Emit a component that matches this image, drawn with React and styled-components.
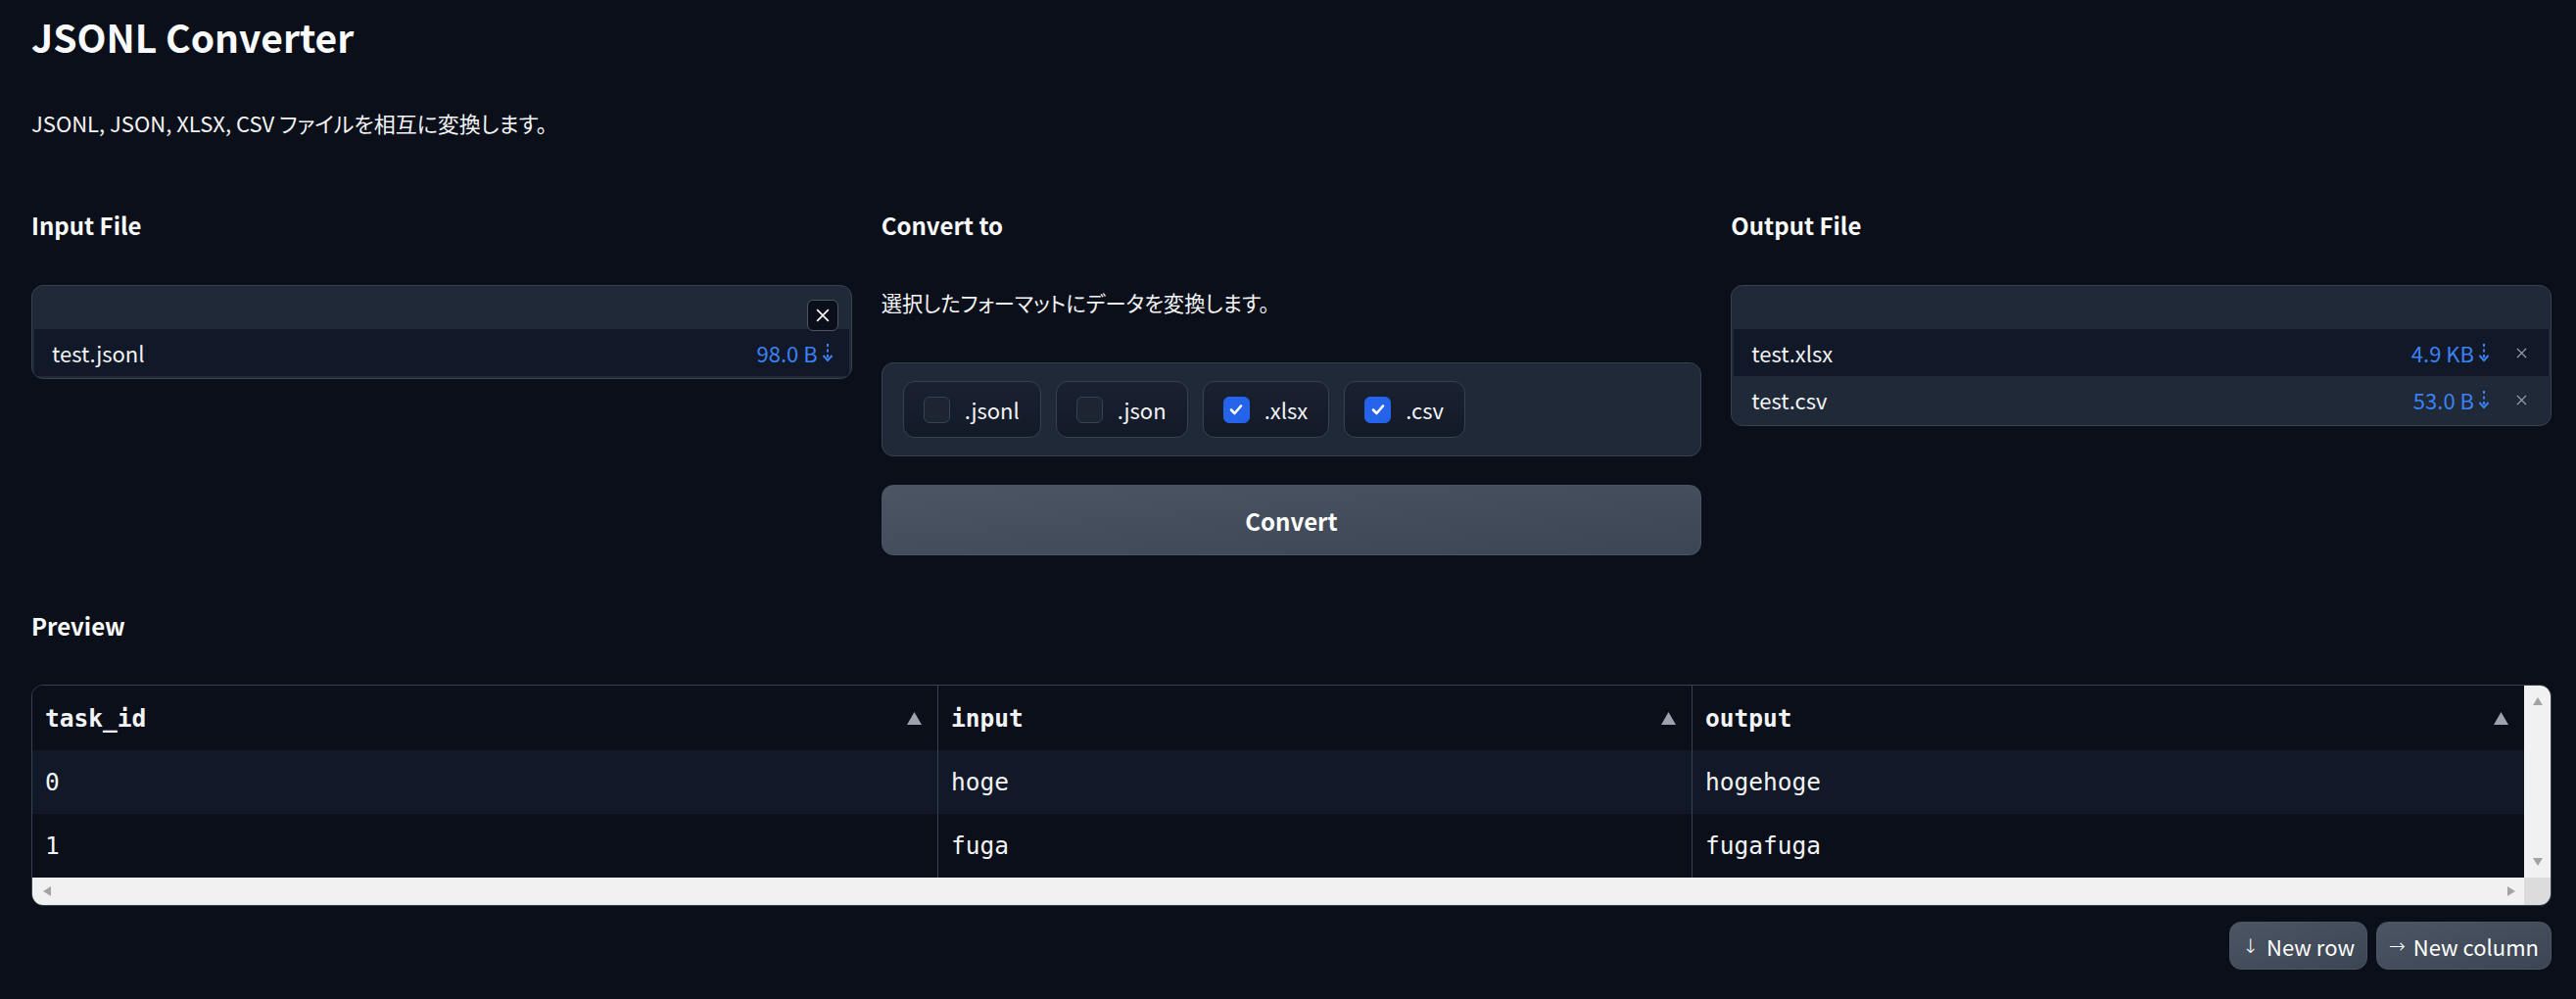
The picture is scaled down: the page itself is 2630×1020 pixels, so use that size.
import React from "react";
import styled, { createGlobalStyle } from "styled-components";

const GlobalStyle = createGlobalStyle`
  html, body { margin: 0; padding: 0; background: #0b0f19; }
  body {
    font-family: "Noto Sans CJK JP", "Noto Sans", sans-serif;
    color: #f3f4f6;
  }
  * { box-sizing: border-box; }
`;

const Page = styled.main`
  min-height: 1020px;
  padding: 14px 25px 30px 32px;
  background: #0b0f19;
`;

const Title = styled.h1`
  margin: 0;
  font-size: 39px;
  line-height: 46px;
  font-weight: 700;
  color: #f9fafb;
`;

const Desc = styled.p`
  margin: 49px 0 0;
  font-size: 22px;
  line-height: 32px;
  font-feature-settings: "palt";
`;

const Columns = styled.section`
  margin-top: 71px;
  display: grid;
  grid-template-columns: repeat(3, 1fr);
  gap: 30px;
  align-items: start;
`;

const Col = styled.div`
  display: flex;
  flex-direction: column;
  gap: 43px;
`;

const Stack = styled.div`
  display: flex;
  flex-direction: column;
  gap: ${(p) => p.$gap}px;
`;

const Heading = styled.h2`
  margin: ${(p) => p.$top || 0}px 0 0;
  font-size: 24px;
  line-height: 36px;
  font-weight: 700;
  color: #f9fafb;
`;

const Note = styled.p`
  margin: 0;
  font-size: 21.3px;
  line-height: 36px;
  font-feature-settings: "palt";
`;

const FileBox = styled.div`
  position: relative;
  background: #1f2937;
  border: 1px solid #374151;
  border-radius: 12px;
  padding: 0 2px 2px;
  overflow: hidden;
`;

const FileHead = styled.div`
  height: 44px;
`;

const FileRow = styled.div`
  height: 48px;
  display: flex;
  align-items: center;
  padding: 0 ${(p) => (p.$removable ? 22 : 16)}px 0 18px;
  background: ${(p) => (p.$dark ? "#111827" : "#1f2937")};
  font-size: 22px;
  color: #f3f4f6;
`;

const FileName = styled.span`
  flex: 1;
`;

const FileSize = styled.span`
  display: flex;
  align-items: center;
  gap: 4px;
  color: #3b82f6;
`;

const RemoveX = styled.span`
  display: flex;
  margin-left: 27px;
  color: #9ca3af;
`;

const ClearButton = styled.button`
  position: absolute;
  top: 14px;
  right: 13px;
  width: 32px;
  height: 32px;
  padding: 0;
  display: flex;
  align-items: center;
  justify-content: center;
  background: #0b0f19;
  border: 1px solid #4b5563;
  border-radius: 6px;
  color: #f3f4f6;
  z-index: 1;
`;

const ChoiceGroup = styled.div`
  display: flex;
  gap: 15px;
  padding: 18px 21px;
  background: #1f2937;
  border: 1px solid #374151;
  border-radius: 12px;
`;

const Chip = styled.label`
  display: flex;
  align-items: center;
  gap: 15px;
  height: 58px;
  padding: 0 21px 0 20px;
  border: 1px solid #374151;
  border-radius: 12px;
  background: linear-gradient(to top, #121927, #1a2231);
  font-size: 22px;
  color: #f3f4f6;
`;

const Box = styled.span`
  width: 27px;
  height: 27px;
  border-radius: 6px;
  display: flex;
  align-items: center;
  justify-content: center;
  background: ${(p) => (p.$checked ? "#2563eb" : "#1d2533")};
  border: 1px solid ${(p) => (p.$checked ? "#2563eb" : "#374151")};
`;

const ConvertButton = styled.button`
  height: 72px;
  border: 1px solid #4b5563;
  border-radius: 12px;
  background: linear-gradient(to bottom right, #4b5563, #3c4553);
  color: #ffffff;
  font-family: inherit;
  font-size: 24px;
  font-weight: 700;
`;

const TableFrame = styled.div`
  margin-top: 42px;
  display: grid;
  grid-template-columns: 1fr 27px;
  grid-template-rows: auto 28px;
  border: 1px solid #374151;
  border-radius: 12px;
  overflow: hidden;
`;

const TableGrid = styled.div`
  display: grid;
  grid-template-columns: 924px 770px 1fr;
`;

const Cell = styled.div`
  height: ${(p) => (p.$header ? 66 : 65)}px;
  display: flex;
  align-items: center;
  justify-content: space-between;
  padding: 0 16px 0 13px;
  border-left: ${(p) => (p.$first ? "none" : "1px solid #374151")};
  background: ${(p) => (p.$stripe ? "#111827" : "#0b0f19")};
  font-family: "DejaVu Sans Mono", "Liberation Mono", monospace;
  font-size: 24.5px;
  font-weight: ${(p) => (p.$header ? 700 : 400)};
  color: #f3f4f6;
`;

const ScrollTrack = styled.div`
  background: ${(p) => (p.$corner ? "#dcdcdc" : "#f1f1f1")};
  display: flex;
  flex-direction: ${(p) => (p.$vertical ? "column" : "row")};
  align-items: center;
  justify-content: space-between;
  padding: ${(p) => (p.$vertical ? "12px 0 12px" : "0 9px 0 11px")};
`;

const Actions = styled.div`
  margin-top: 16px;
  display: flex;
  justify-content: flex-end;
  gap: 9px;
`;

const SmallButton = styled.button`
  height: 49px;
  padding: 0 12px;
  display: flex;
  align-items: center;
  gap: 8px;
  border: 1px solid #4b5563;
  border-radius: 12px;
  background: linear-gradient(to bottom right, #4b5563, #3c4553);
  color: #ffffff;
  font-family: "Noto Sans CJK JP", sans-serif;
  font-size: 22px;
`;

const Arrow = styled.span`
  font-family: "DejaVu Sans", sans-serif;
  font-size: 20px;
  font-weight: 300;
`;

const DownloadIcon = () => (
  <svg width="12" height="20" viewBox="0 0 12 20">
    <path d="M6 1 V17" stroke="#3b82f6" strokeWidth="2" strokeDasharray="3 2.5" fill="none" />
    <path d="M1.5 13 L6 18 L10.5 13" stroke="#3b82f6" strokeWidth="2" fill="none" />
  </svg>
);

const XIcon = ({ size = 12, width = 1.6 }) => (
  <svg width={size} height={size} viewBox="0 0 12 12">
    <path d="M1 1 L11 11 M11 1 L1 11" stroke="currentColor" strokeWidth={width} fill="none" />
  </svg>
);

const Check = () => (
  <svg width="16" height="16" viewBox="0 0 16 16">
    <path d="M3 8.5 L6.5 12 L13 4.5" stroke="#fff" strokeWidth="2.6" fill="none" strokeLinecap="round" strokeLinejoin="round" />
  </svg>
);

const SortIcon = () => (
  <svg width="15" height="13" viewBox="0 0 15 13">
    <polygon points="7.5,0 15,13 0,13" fill="#9ca3af" />
  </svg>
);

const Tri = ({ dir }) => {
  const pts = {
    up: "5,0 10,8 0,8",
    down: "0,0 10,0 5,8",
    left: "8,0 8,10 0,5",
    right: "0,0 8,5 0,10",
  }[dir];
  const vertical = dir === "up" || dir === "down";
  return (
    <svg width={vertical ? 10 : 8} height={vertical ? 8 : 10} viewBox={vertical ? "0 0 10 8" : "0 0 8 10"}>
      <polygon points={pts} fill="#a3a3a3" />
    </svg>
  );
};

const formats = [
  { label: ".jsonl", checked: false },
  { label: ".json", checked: false },
  { label: ".xlsx", checked: true },
  { label: ".csv", checked: true },
];

const headers = ["task_id", "input", "output"];
const rows = [
  ["0", "hoge", "hogehoge"],
  ["1", "fuga", "fugafuga"],
];

export default function App() {
  return (
    <>
      <GlobalStyle />
      <Page>
        <Title>JSONL Converter</Title>
        <Desc>JSONL, JSON, XLSX, CSV ファイルを相互に変換します。</Desc>

        <Columns>
          <Col>
            <Heading>Input File</Heading>
            <FileBox>
              <ClearButton aria-label="clear">
                <XIcon size={14} width={1.5} />
              </ClearButton>
              <FileHead />
              <FileRow $dark>
                <FileName>test.jsonl</FileName>
                <FileSize>
                  98.0 B <DownloadIcon />
                </FileSize>
              </FileRow>
            </FileBox>
          </Col>

          <Col>
            <Heading>Convert to</Heading>
            <Note>選択したフォーマットにデータを変換します。</Note>
            <Stack $gap={29}>
              <ChoiceGroup>
                {formats.map((f) => (
                  <Chip key={f.label}>
                    <Box $checked={f.checked}>{f.checked && <Check />}</Box>
                    {f.label}
                  </Chip>
                ))}
              </ChoiceGroup>
              <ConvertButton>Convert</ConvertButton>
            </Stack>
          </Col>

          <Col>
            <Heading>Output File</Heading>
            <FileBox>
              <FileHead />
              <FileRow $dark $removable>
                <FileName>test.xlsx</FileName>
                <FileSize>
                  4.9 KB <DownloadIcon />
                </FileSize>
                <RemoveX>
                  <XIcon size={11} width={1.4} />
                </RemoveX>
              </FileRow>
              <FileRow $removable>
                <FileName>test.csv</FileName>
                <FileSize>
                  53.0 B <DownloadIcon />
                </FileSize>
                <RemoveX>
                  <XIcon size={11} width={1.4} />
                </RemoveX>
              </FileRow>
            </FileBox>
          </Col>
        </Columns>

        <Heading $top={54}>Preview</Heading>
        <TableFrame>
          <TableGrid>
            {headers.map((h, i) => (
              <Cell key={h} $header $first={i === 0}>
                {h}
                <SortIcon />
              </Cell>
            ))}
            {rows.map((r, ri) =>
              r.map((v, ci) => (
                <Cell key={`${ri}-${ci}`} $first={ci === 0} $stripe={ri === 0}>
                  {v}
                </Cell>
              ))
            )}
          </TableGrid>
          <ScrollTrack $vertical>
            <Tri dir="up" />
            <Tri dir="down" />
          </ScrollTrack>
          <ScrollTrack>
            <Tri dir="left" />
            <Tri dir="right" />
          </ScrollTrack>
          <ScrollTrack $corner />
        </TableFrame>

        <Actions>
          <SmallButton>
            <Arrow>↓</Arrow>New row
          </SmallButton>
          <SmallButton>
            <Arrow>→</Arrow>New column
          </SmallButton>
        </Actions>
      </Page>
    </>
  );
}
